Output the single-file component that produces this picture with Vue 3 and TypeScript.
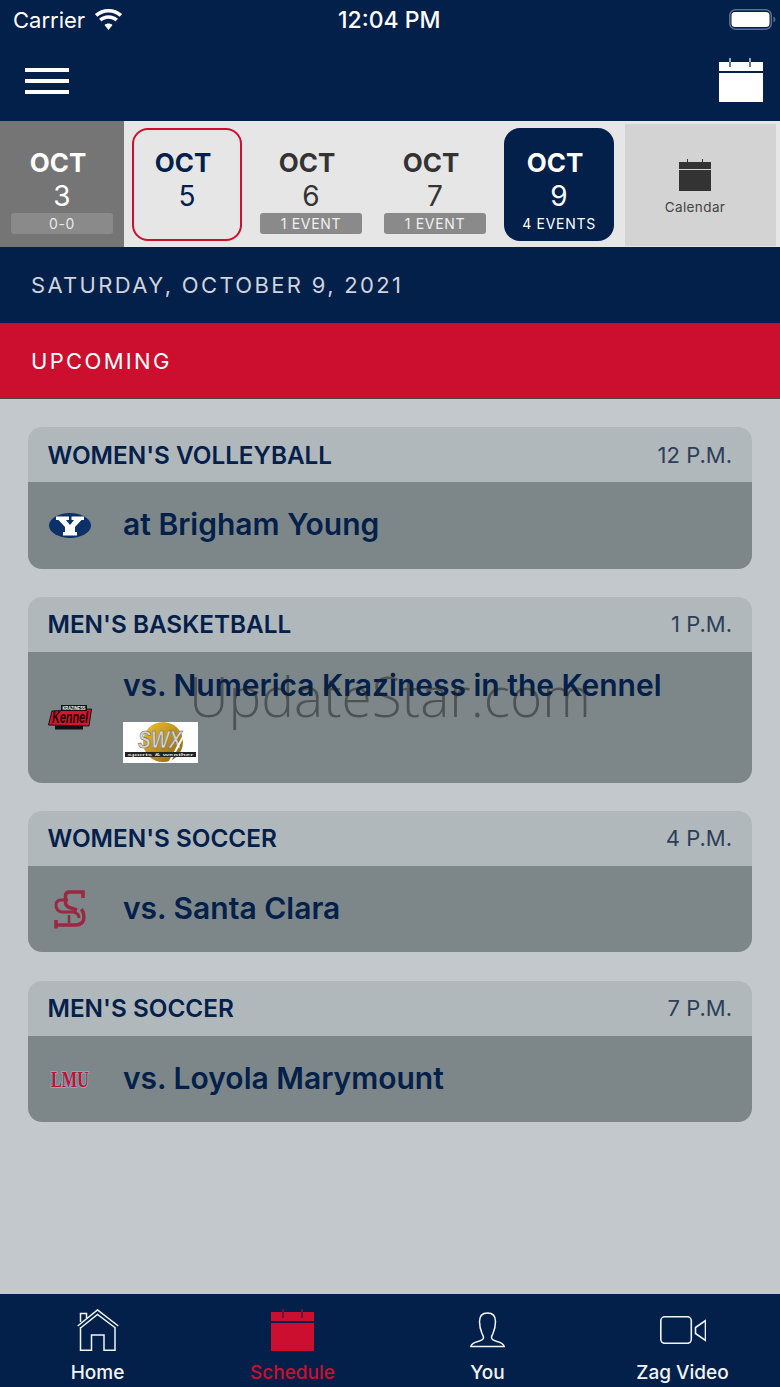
<template>
  <div class="screen">
    <header class="top">
      <div class="status">
        <div class="status-left">
          <span>Carrier</span>
          <svg class="wifi" viewBox="0 0 29 21"><path d="M14.500 3.500c4.300 0 8.200 1.600 11.200 4.300l2.400-2.700C24.400 1.800 19.700 0 14.500 0S4.600 1.800.9 5.100l2.400 2.700c3-2.700 6.900-4.300 11.200-4.300zM14.500 9.800c2.700 0 5.100 1 7 2.600l2.400-2.700c-2.500-2.200-5.800-3.500-9.400-3.500S7.600 7.500 5.100 9.700l2.400 2.700c1.900-1.600 4.300-2.600 7-2.600zM14.500 14.500c-1.500 0-2.900.5-4 1.500l4 5 4-5c-1.100-1-2.500-1.500-4-1.500z" fill="#fff"/></svg>
        </div>
        <span class="clock">12:04 PM</span>
        <svg class="battery" viewBox="0 0 47 21">
          <rect x=".8" y=".8" width="41.500" height="19.400" rx="5.500" fill="none" stroke="#5c6f8e" stroke-width="1.500"/>
          <rect x="2.500" y="3" width="38" height="15" rx="3.500" fill="#fff"/>
          <path d="M44.500 7.500c1.200.5 1.800 1.600 1.800 3s-.6 2.500-1.800 3z" fill="#5c6f8e"/>
        </svg>
      </div>
      <div class="navrow">
        <div class="burger"><i></i><i></i><i></i></div>
        <svg class="cal-big" viewBox="0 0 44 44">
          <path d="M0 4h44v9H0zM0 15h44v29H0z" fill="#fff"/>
          <path d="M11 0v4M31 0v4" stroke="#fff" stroke-width="1.200"/>
          <path d="M11 4v5M31 4v5" stroke="#02204a" stroke-width="1.200"/>
        </svg>
      </div>
    </header>

    <div class="strip">
      <div class="day day-past">
        <b>OCT</b><span class="num">3</span><span class="badge">0-0</span>
      </div>
      <div class="days">
        <div
          v-for="d in days"
          :key="d.num"
          :class="['day', 'pick', d.kind]"
        >
          <b>OCT</b><span class="num">{{ d.num }}</span>
          <span v-if="d.label" class="badge">{{ d.label }}</span>
        </div>
      </div>
      <div class="cal-btn">
        <svg viewBox="0 0 32 32">
          <path d="M0 3h32v7H0zM0 11h32v21H0z" fill="#333"/>
          <path d="M8.500 0v6M23.500 0v6" stroke="#333" stroke-width="1"/>
        </svg>
        <span>Calendar</span>
      </div>
    </div>

    <div class="band band-navy">SATURDAY, OCTOBER 9, 2021</div>
    <div class="band band-red">UPCOMING</div>

    <main class="list">
      <section v-for="g in games" :key="g.sport" class="card">
        <div class="card-head">
          <span class="sport">{{ g.sport }}</span>
          <span class="time">{{ g.time }}</span>
        </div>
        <div :class="['card-body', { tall: g.sponsor }]">
          <div class="logo">
            <svg v-if="g.logo === 'byu'" viewBox="0 0 42 25" width="42" height="25">
              <ellipse cx="21" cy="12.500" rx="21" ry="12.500" fill="#0c3068"/>
              <path d="M7 3.500h13V7h-3l4 5 4-5h-2.500V3.500H35V7h-2.500L26 14v5h2v3.500H14V19h2v-5L9.500 7H7z" fill="#fff"/>
            </svg>
            <svg v-else-if="g.logo === 'kennel'" viewBox="0 0 44 25" width="44" height="25">
              <path d="M4 6 43.500 4 41 21 .5 20z" fill="#d7132d" stroke="#111" stroke-width="1"/>
              <rect x="13" y="0" width="26" height="6" fill="#111"/>
              <text x="26" y="5" text-anchor="middle" textLength="23" lengthAdjust="spacingAndGlyphs" class="kennel-top">KRAZINESS</text>
              <text x="22" y="18" text-anchor="middle" textLength="36" lengthAdjust="spacingAndGlyphs" class="kennel-text">Kennel</text>
              <rect x="7" y="21" width="28" height="3.500" fill="#111"/>
            </svg>
            <svg v-else-if="g.logo === 'scu'" viewBox="0 0 31 40" width="31" height="40" fill="none" stroke="#9c2740">
              <path d="M29 9V3H15.500Q11.500 3 11.500 7V13Q11.500 18 17 19L23 21" stroke-width="3.500"/>
              <path d="M27.500 20Q30 24 30 28 30 36 21 36H3" stroke-width="3.500"/>
              <path d="M2 31v8.500" stroke-width="3.500"/>
              <path d="M14 11H7Q2 11 2 16 2 22 8 23H19Q25 24 25 29" stroke-width="3"/>
              <path d="M15 26v8" stroke-width="2.500"/>
            </svg>
            <svg v-else viewBox="0 0 44 22" width="44" height="22">
              <text x="22" y="18.500" text-anchor="middle" textLength="38" lengthAdjust="spacingAndGlyphs" class="lmu-text">LMU</text>
            </svg>
          </div>
          <div class="matchup">
            <div class="opponent">{{ g.opponent }}</div>
            <svg v-if="g.sponsor" class="sponsor" viewBox="0 0 75 41" width="75" height="41">
              <defs>
                <linearGradient id="swx-globe" x1="0" y1="0" x2="1" y2="1">
                  <stop offset="0" stop-color="#f0c430" />
                  <stop offset="1" stop-color="#8c5f10" />
                </linearGradient>
              </defs>
              <rect width="75" height="41" fill="#fff"/>
              <circle cx="40" cy="20" r="20" fill="url(#swx-globe)"/>
              <text x="37" y="26" text-anchor="middle" textLength="44" lengthAdjust="spacingAndGlyphs" class="swx-text">SWX</text>
              <path d="M61 13 46 41" stroke="#fff" stroke-width="2"/>
              <rect x="2" y="30" width="71" height="5" fill="#222"/>
              <text x="37.500" y="34" text-anchor="middle" textLength="66" lengthAdjust="spacingAndGlyphs" class="swx-small">sports &amp; weather</text>
            </svg>
          </div>
        </div>
      </section>
    </main>

    <nav class="tabs">
      <div class="tab">
        <span class="slot">
          <svg viewBox="0 0 42 42" width="42" height="42" fill="none" stroke="#f2f5f9" stroke-width="1.500">
            <path d="M.7 17 20.500.9 41.300 17M3.500 19 20.500 5.500 38.500 19M3.500 18v23.300h11V26H27v15.300h11V18M3.500 13V4.500h6V9"/>
          </svg>
        </span>
        <span>Home</span>
      </div>
      <div class="tab active">
        <span class="slot">
          <svg viewBox="0 0 43 42" width="43" height="42">
            <path d="M0 3h43v9H0zM0 14h43v28H0z" fill="#cc0f2e"/>
            <path d="M12 0v3M31 0v3" stroke="#cc0f2e" stroke-width="1"/>
            <path d="M12 3v6M31 3v6" stroke="#02204a" stroke-width="1"/>
          </svg>
        </span>
        <span>Schedule</span>
      </div>
      <div class="tab">
        <span class="slot">
          <svg viewBox="0 0 36 36" width="36" height="36" fill="none" stroke="#f2f5f9" stroke-width="1.500">
            <path d="M.8 34.500C1.500 32 4 30.500 8 29.500c3.500-.9 5.500-2 5.500-4 0-1.500-.8-2.500-1.500-4C10.500 18 9.500 14 9.500 9.500 9.500 4 12.500 1 17.500 1s8 3 8 8.500c0 4.500-1 8.500-2.500 12-.7 1.500-1.500 2.500-1.500 4 0 2 2 3.100 5.500 4 4 1 6.500 2.500 7.200 5z"/>
          </svg>
        </span>
        <span>You</span>
      </div>
      <div class="tab">
        <span class="slot">
          <svg viewBox="0 0 46 28" width="46" height="28" fill="none" stroke="#f2f5f9" stroke-width="1.600">
            <rect x=".8" y=".8" width="30.500" height="26.500" rx="4"/>
            <path d="M45.500 4.500v20l-10-7v-6z"/>
          </svg>
        </span>
        <span>Zag Video</span>
      </div>
    </nav>

    <div class="watermark">UpdateStar.com</div>
  </div>
</template>

<script setup lang="ts">
interface Game {
  sport: string
  time: string
  opponent: string
  logo: 'byu' | 'kennel' | 'scu' | 'lmu'
  sponsor?: boolean
}

const days = [
  { num: 5, kind: 'selected', label: '' },
  { num: 6, kind: '', label: '1 EVENT' },
  { num: 7, kind: '', label: '1 EVENT' },
  { num: 9, kind: 'current', label: '4 EVENTS' },
]

const games: Game[] = [
  { sport: "WOMEN'S VOLLEYBALL", time: '12 P.M.', opponent: 'at Brigham Young', logo: 'byu' },
  { sport: "MEN'S BASKETBALL", time: '1 P.M.', opponent: 'vs. Numerica Kraziness in the Kennel', logo: 'kennel', sponsor: true },
  { sport: "WOMEN'S SOCCER", time: '4 P.M.', opponent: 'vs. Santa Clara', logo: 'scu' },
  { sport: "MEN'S SOCCER", time: '7 P.M.', opponent: 'vs. Loyola Marymount', logo: 'lmu' },
]
</script>

<style>
body {
  background: #c3c8cc;
}
</style>

<style scoped>
.screen {
  position: relative;
  width: 780px;
  height: 1387px;
  display: flex;
  flex-direction: column;
  overflow: hidden;
  background: #c3c8cc;
  font-family: Inter, "Liberation Sans", sans-serif;
}

.top {
  height: 121px;
  background: #02204a;
  color: #fff;
}

.status {
  height: 40px;
  padding: 0 8px 0 13px;
  display: grid;
  grid-template-columns: 370px auto 1fr;
  align-items: center;
  font-size: 22px;
}

.status-left {
  display: flex;
  align-items: center;
  gap: 9px;
}

.wifi {
  width: 29px;
  height: 21px;
  margin-top: -2px;
}

.clock {
  margin-left: -45px;
  font-weight: 500;
  font-size: 23px;
}

.battery {
  justify-self: end;
  width: 47px;
  height: 21px;
  margin: -2px -4px 0 0;
}

.navrow {
  height: 81px;
  padding: 0 17px 0 25px;
  display: flex;
  align-items: center;
  justify-content: space-between;
}

.burger {
  display: flex;
  flex-direction: column;
  gap: 7px;
  width: 44px;
}

.burger i {
  display: block;
  height: 4px;
  background: #fff;
}

.cal-big {
  width: 44px;
  height: 44px;
  margin-top: -1px;
}

.strip {
  height: 126px;
  display: flex;
  background: #e6e6e6;
}

.day {
  display: flex;
  flex-direction: column;
  align-items: center;
  color: #333;
}

.day b {
  margin: 25px 8px 0 0;
  font-size: 26px;
  line-height: 33px;
  font-weight: 700;
}

.num {
  margin-top: 1px;
  font-size: 28px;
  line-height: 33px;
  font-weight: 400;
}

.badge {
  width: 102px;
  height: 21px;
  border-radius: 3px;
  background: #8a8a8a;
  color: #f0f0f0;
  font-size: 14px;
  line-height: 21px;
  text-align: center;
  letter-spacing: .7px;
}

.day-past {
  width: 124px;
  background: #757575;
  color: #fff;
}

.day-past .badge {
  background: #8a8a8a;
  color: #e8e8e8;
}

.days {
  display: flex;
  gap: 14px;
  padding: 7px 0 0 8px;
}

.pick {
  width: 110px;
  height: 113px;
  border-radius: 16px;
  box-sizing: border-box;
}

.pick b {
  margin-top: 18px;
}

.selected {
  border: 2px solid #cc0f2e;
  color: #02204a;
}

.selected b {
  margin-top: 16px;
}

.current {
  background: #02204a;
  color: #fff;
}

.current .badge {
  background: none;
  color: #fff;
}

.cal-btn {
  width: 151px;
  height: 122px;
  margin: 3px 0 0 11px;
  padding-right: 11px;
  box-sizing: border-box;
  background: #d3d3d3;
  display: flex;
  flex-direction: column;
  align-items: center;
  color: #444;
  font-size: 13.500px;
  letter-spacing: .4px;
}

.cal-btn svg {
  width: 32px;
  height: 32px;
  margin-top: 35px;
  margin-bottom: 8px;
}

.band {
  height: 76px;
  padding-left: 31px;
  box-sizing: border-box;
  display: flex;
  align-items: center;
  font-size: 22px;
  letter-spacing: 2.330px;
}

.band-navy {
  background: #02204a;
  color: #d0d4db;
}

.band-red {
  background: #cc0f2e;
  color: #fff;
  border-bottom: 1px solid #4a4a4a;
}

.list {
  flex: 1;
  padding: 28px 28px 0;
  display: flex;
  flex-direction: column;
  gap: 28.200px;
}

.card {
  border-radius: 14px;
  overflow: hidden;
}

.card-head {
  height: 55px;
  padding: 0 20px;
  box-sizing: border-box;
  background: #b1b8bc;
  display: flex;
  align-items: center;
  justify-content: space-between;
  color: #02204a;
}

.sport {
  margin-left: -.5px;
  font-size: 24.300px;
  font-weight: 600;
}

.time {
  font-size: 22px;
  color: #2c3e58;
}

.card-body {
  height: 86.500px;
  background: #7d8789;
  display: flex;
  align-items: center;
}

.card-body.tall {
  height: 131px;
}

.logo {
  width: 95px;
  flex: none;
  display: flex;
  justify-content: center;
  padding-right: 12px;
  box-sizing: border-box;
}

.logo svg {
  display: block;
  overflow: visible;
}

.matchup {
  margin-top: -2px;
}

.opponent {
  font-size: 30px;
  font-weight: 600;
  color: #02204a;
}

.tall .matchup {
  align-self: flex-start;
  margin-top: 0;
  padding-top: 15px;
}

.sponsor {
  display: block;
  margin-top: 19px;
}

.kennel-top {
  font: 700 5px "Liberation Sans", sans-serif;
  fill: #fff;
}

.kennel-text {
  font: italic 700 16px "Liberation Sans", sans-serif;
  fill: #1a0508;
}

.swx-text {
  font: italic 700 24px "Liberation Sans", sans-serif;
  fill: #d4d4d4;
  stroke: #6a6a6a;
  stroke-width: .6px;
}

.swx-small {
  font: 700 4px "Liberation Sans", sans-serif;
  fill: #ddd;
}

.lmu-text {
  font: 700 24px "Liberation Serif", serif;
  fill: #c8102e;
  stroke: #6fb3c8;
  stroke-width: 2px;
  paint-order: stroke;
}

.tabs {
  height: 93px;
  background: #02204a;
  display: grid;
  grid-template-columns: repeat(4, 1fr);
}

.tab {
  display: flex;
  flex-direction: column;
  align-items: center;
  padding-top: 14px;
  box-sizing: border-box;
  color: #f2f5f9;
  font-size: 19px;
  font-weight: 500;
  line-height: 24px;
}

.slot {
  height: 44px;
  margin-bottom: 9px;
  display: flex;
  align-items: center;
}

.tab.active {
  color: #cc0f2e;
}

.watermark {
  position: absolute;
  left: 189px;
  top: 661px;
  font-family: "Open Sans", sans-serif;
  font-size: 55px;
  font-weight: 300;
  line-height: 70px;
  color: rgba(30, 30, 30, .5);
  pointer-events: none;
}
</style>
